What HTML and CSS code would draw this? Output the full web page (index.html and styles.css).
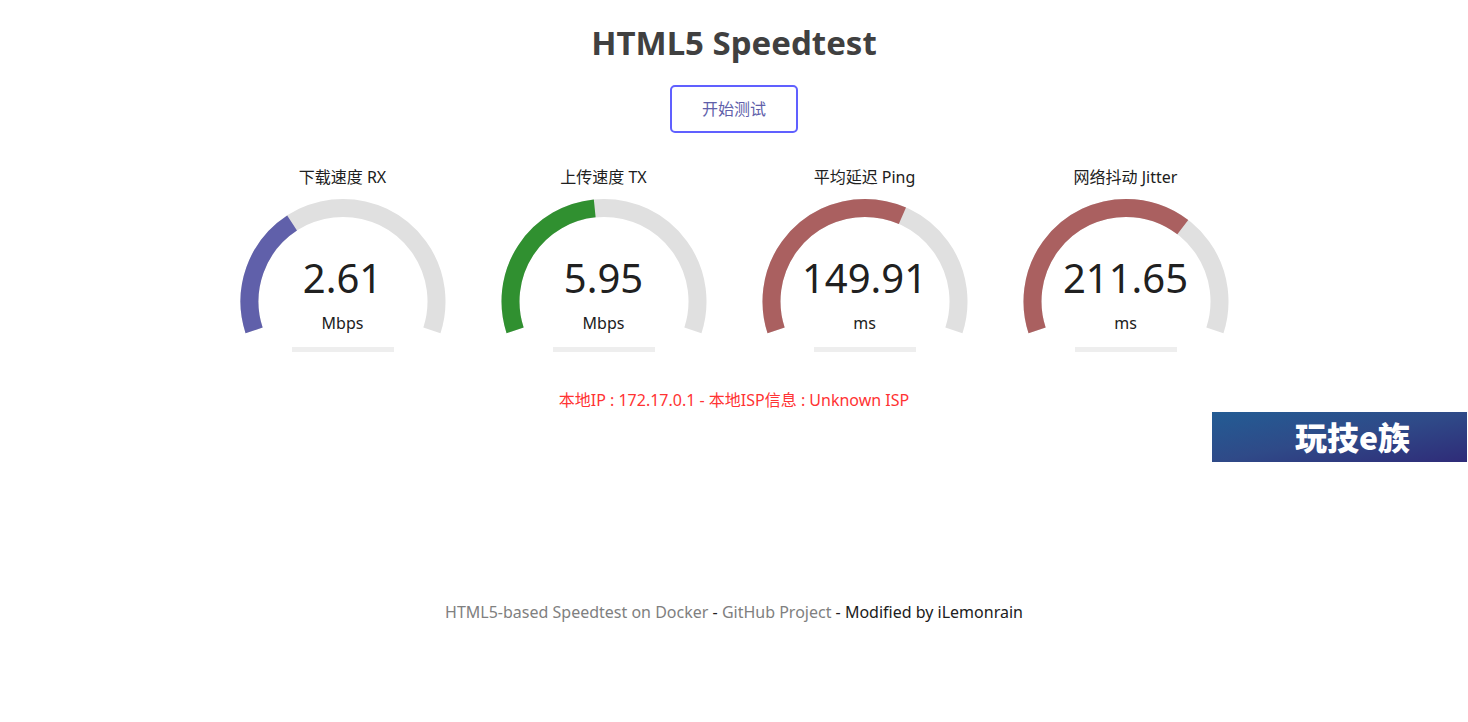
FILE: index.html
```html
<!DOCTYPE html>
<html lang="zh-CN">
<head>
  <meta charset="UTF-8">
  <meta name="viewport" content="width=device-width, initial-scale=1">
  <title>HTML5 Speedtest</title>
  <link rel="stylesheet" href="styles.css">
</head>
<body>
  <h1>HTML5 Speedtest</h1>
  <button type="button" class="start-btn">开始测试</button>

  <main class="meters">
    <section class="meter">
      <h2>下载速度 RX</h2>
      <div class="gauge">
        <svg viewBox="0 0 206 136" aria-hidden="true">
          <path class="track" d="M14.1 132.4A93.5 93.5 0 1 1 191.9 132.4"/>
          <path class="fill download" pathLength="216" stroke-dasharray="75 400" d="M14.1 132.4A93.5 93.5 0 1 1 191.9 132.4"/>
        </svg>
        <div class="value">2.61</div>
      </div>
      <div class="unit">Mbps</div>
      <div class="progress"></div>
    </section>

    <section class="meter">
      <h2>上传速度 TX</h2>
      <div class="gauge">
        <svg viewBox="0 0 206 136" aria-hidden="true">
          <path class="track" d="M14.1 132.4A93.5 93.5 0 1 1 191.9 132.4"/>
          <path class="fill upload" pathLength="216" stroke-dasharray="102.3 400" d="M14.1 132.4A93.5 93.5 0 1 1 191.9 132.4"/>
        </svg>
        <div class="value">5.95</div>
      </div>
      <div class="unit">Mbps</div>
      <div class="progress"></div>
    </section>

    <section class="meter">
      <h2>平均延迟 Ping</h2>
      <div class="gauge">
        <svg viewBox="0 0 206 136" aria-hidden="true">
          <path class="track" d="M14.1 132.4A93.5 93.5 0 1 1 191.9 132.4"/>
          <path class="fill ping" pathLength="216" stroke-dasharray="131.6 400" d="M14.1 132.4A93.5 93.5 0 1 1 191.9 132.4"/>
        </svg>
        <div class="value">149.91</div>
      </div>
      <div class="unit">ms</div>
      <div class="progress"></div>
    </section>

    <section class="meter">
      <h2>网络抖动 Jitter</h2>
      <div class="gauge">
        <svg viewBox="0 0 206 136" aria-hidden="true">
          <path class="track" d="M14.1 132.4A93.5 93.5 0 1 1 191.9 132.4"/>
          <path class="fill ping" pathLength="216" stroke-dasharray="145.4 400" d="M14.1 132.4A93.5 93.5 0 1 1 191.9 132.4"/>
        </svg>
        <div class="value">211.65</div>
      </div>
      <div class="unit">ms</div>
      <div class="progress"></div>
    </section>
  </main>

  <p class="ip-info">本地IP : 172.17.0.1 - 本地ISP信息 : Unknown ISP</p>

  <div class="banner">玩技e族</div>

  <footer>
    <a href="#">HTML5-based Speedtest on Docker</a> - <a href="#">GitHub Project</a> - Modified by iLemonrain
  </footer>
</body>
</html>
```
FILE: styles.css
```css
* { margin: 0; padding: 0; box-sizing: border-box; }
body {
  display: flex; flex-direction: column; align-items: center;
  padding-top: 18px;
  background: #fff; color: #202020;
  font-family: "Noto Sans", "Noto Sans CJK SC", sans-serif;
  font-size: 16px; line-height: 24px;
  text-align: center;
}
h1 { color: #404040; font-size: 33px; line-height: 50px; }

.start-btn {
  width: 128px; height: 48px;
  margin-top: 17px;
  background: #fff; color: #6060aa;
  border: 2px solid #6060ff; border-radius: 5px;
  font: inherit;
  cursor: pointer;
}
.start-btn:hover { box-shadow: 0 0 8px #6060ff; }

/* meters */
.meters {
  display: flex; flex-wrap: wrap; justify-content: center;
  gap: 24px 55px;
  margin-top: 32px;
}
.meter {
  display: flex; flex-direction: column; align-items: center;
  width: 206px;
}
.meter h2 { font-size: 16px; font-weight: normal; }
.gauge { display: grid; width: 100%; height: 113px; margin-top: 9px; }
.gauge > * { grid-area: 1 / 1; }
.gauge svg { width: 100%; height: 136px; }
.track, .fill { fill: none; stroke-width: 18; }
.track { stroke: #e0e0e0; }
.download { stroke: #6060aa; }
.upload { stroke: #309030; }
.ping { stroke: #aa6060; }
.value { align-self: start; padding-top: 52px; font-size: 40px; line-height: 56px; }
.progress { width: 102px; height: 5px; margin-top: 12px; background: #eee; }

.ip-info { margin-top: 36px; color: #f33; }

.banner {
  align-self: flex-end;
  width: 255px; height: 50px;
  padding-left: 26px;
  margin-right: 1px;
  background: linear-gradient(to bottom right, #235c94, #2f4a88 50%, #2f2b78);
  color: #fff;
  font-family: "Noto Sans CJK SC", sans-serif;
  font-size: 32px; font-weight: 900; line-height: 48px;
}

footer { margin: 138px 0 40px; }
footer a { color: #808080; text-decoration: none; }
footer a:hover { text-decoration: underline; }
```
